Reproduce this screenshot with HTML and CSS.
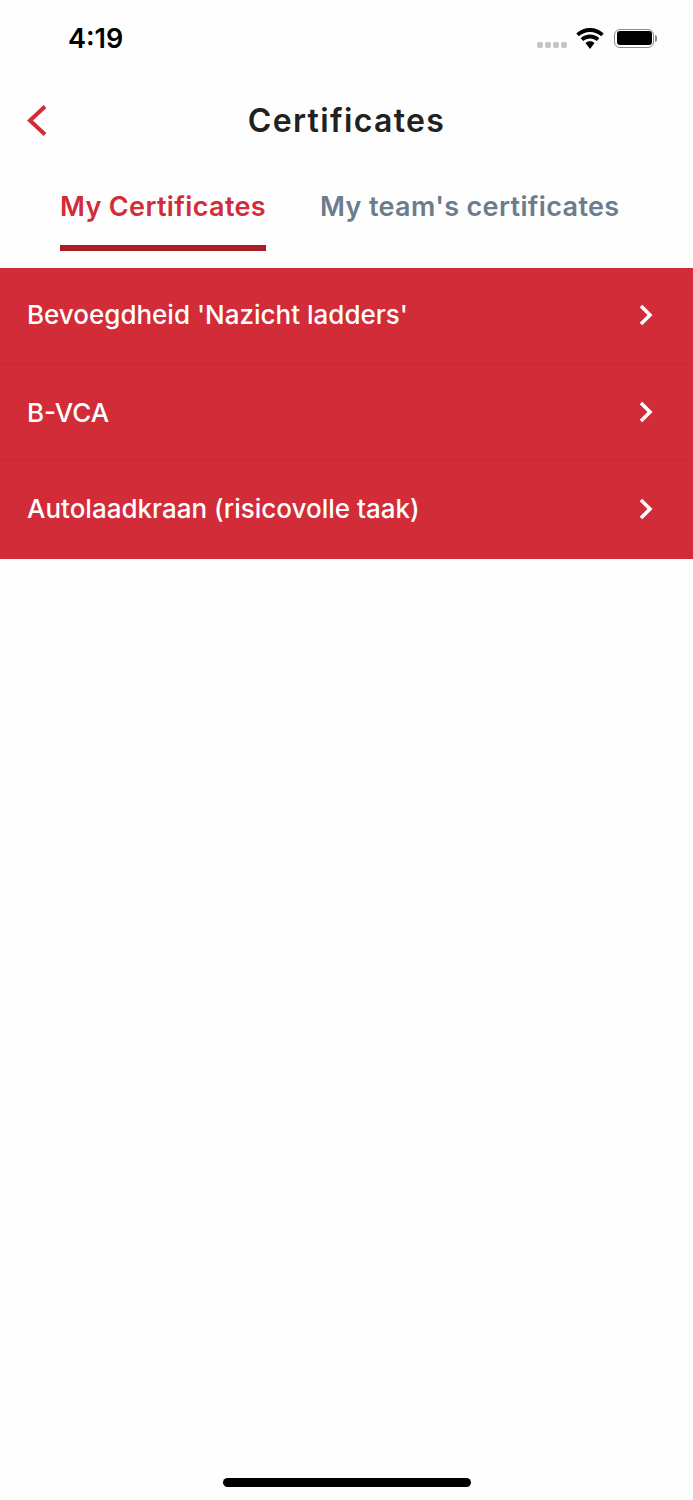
FILE: index.html
```html
<!DOCTYPE html>
<html lang="en">
<head>
    <meta charset="UTF-8">
    <meta name="viewport" content="width=device-width, initial-scale=1.0">
    <title>Certificates</title>
    <link rel="stylesheet" href="styles.css">
</head>
<body>
    <div class="screen">
        <div class="status-bar">
            <span class="time">4:19</span>
            <div class="status-icons">
                <div class="signal">
                    <span class="dot"></span><span class="dot"></span><span class="dot"></span><span class="dot"></span>
                </div>
                <svg class="wifi" width="28" height="21" viewBox="2 0.900 23 17.600">
                    <path d="M13.500 4.200c3.600 0 6.900 1.400 9.400 3.700l2.100-2.400C22 2.600 18 .9 13.500.9S5 2.600 2 5.500l2.100 2.400c2.500-2.300 5.800-3.700 9.400-3.700z" fill="#000"/>
                    <path d="M13.500 9.600c2.200 0 4.200.8 5.700 2.200l2.100-2.400c-2.100-1.900-4.800-3-7.800-3s-5.700 1.100-7.800 3l2.100 2.400c1.500-1.400 3.500-2.200 5.700-2.200z" fill="#000"/>
                    <path d="M13.500 12c-1.500 0-2.800.5-3.800 1.400l3.800 5.100 3.800-5.100c-1-.9-2.300-1.400-3.800-1.400z" fill="#000"/>
                </svg>
                <div class="battery">
                    <div class="battery-body"><div class="battery-fill"></div></div>
                    <div class="battery-tip"></div>
                </div>
            </div>
        </div>

        <div class="header">
            <a class="back" href="#">
                <svg width="22" height="34" viewBox="0 0 22 34">
                    <path d="M20 3.500 L5 17.500 L20 31.500" fill="none" stroke="#d12c38" stroke-width="4"/>
                </svg>
            </a>
            <h1>Certificates</h1>
        </div>

        <div class="tabs">
            <div class="tab active">My Certificates</div>
            <div class="tab">My team's certificates</div>
        </div>

        <div class="list">
            <div class="list-row">
                <span>Bevoegdheid 'Nazicht ladders'</span>
                <svg class="chevron" width="16" height="24" viewBox="0 0 16 24"><path d="M3 3 L12 12 L3 21" fill="none" stroke="#fff" stroke-width="3.600"/></svg>
            </div>
            <div class="list-row">
                <span>B-VCA</span>
                <svg class="chevron" width="16" height="24" viewBox="0 0 16 24"><path d="M3 3 L12 12 L3 21" fill="none" stroke="#fff" stroke-width="3.600"/></svg>
            </div>
            <div class="list-row">
                <span>Autolaadkraan (risicovolle taak)</span>
                <svg class="chevron" width="16" height="24" viewBox="0 0 16 24"><path d="M3 3 L12 12 L3 21" fill="none" stroke="#fff" stroke-width="3.600"/></svg>
            </div>
        </div>

        <div class="spacer"></div>
        <div class="home-bar"><div class="home-indicator"></div></div>
    </div>
</body>
</html>
```

FILE: styles.css
```css
body {
    font-family: Inter, "Liberation Sans", sans-serif;
    margin: 0;
    padding: 0;
    background-color: #fefefe;
}
.screen {
    display: flex;
    flex-direction: column;
    width: 693px;
    height: 1500px;
    overflow: hidden;
}
.status-bar {
    display: flex;
    justify-content: space-between;
    align-items: center;
    height: 76px;
    padding: 0 36px 0 68px;
    box-sizing: border-box;
}
.time {
    font-size: 27px;
    font-weight: 600;
    color: #000;
}
.status-icons {
    display: flex;
    align-items: center;
}
.signal {
    display: flex;
    gap: 2px;
    margin: 14px 9px 0 0;
}
.dot {
    width: 6px;
    height: 6px;
    border-radius: 2px;
    background-color: #c4c4c4;
}
.wifi {
    margin-right: 10px;
}
.battery {
    display: flex;
    align-items: center;
}
.battery-body {
    width: 35px;
    height: 14px;
    padding: 1.500px;
    border: 1.500px solid #8a8a8a;
    border-radius: 6px;
}
.battery-fill {
    height: 100%;
    background-color: #000;
    border-radius: 3px;
}
.battery-tip {
    width: 2px;
    height: 7px;
    margin-left: 1px;
    background-color: #8a8a8a;
    border-radius: 0 2px 2px 0;
}
.header {
    display: flex;
    align-items: center;
    justify-content: center;
    position: relative;
    height: 88px;
}
.back {
    position: absolute;
    left: 25px;
    top: 27px;
    line-height: 0;
}
h1 {
    margin: 0;
    font-size: 32px;
    font-weight: 600;
    letter-spacing: 1.350px;
    color: #212121;
}
.tabs {
    display: flex;
    gap: 54px;
    height: 87px;
    padding: 0 60px 17px;
}
.tab {
    display: flex;
    align-items: center;
    height: 77px;
    padding-top: 4px;
    font-size: 27px;
    font-weight: 600;
    letter-spacing: 0.350px;
    color: #6b7c8c;
    white-space: nowrap;
}
.tab.active {
    color: #d12c38;
    border-bottom: 6px solid #ab1c27;
}
.list {
    background-color: #d12c38;
}
.list-row {
    display: flex;
    justify-content: space-between;
    align-items: center;
    height: 97px;
    padding: 0 39px 0 27px;
    border-bottom: 1px solid #c42a35;
    box-sizing: border-box;
    font-size: 26px;
    font-weight: 500;
    color: #fff;
}
.list-row:first-child {
    height: 96px;
    padding-bottom: 2px;
}
.list-row:last-child {
    height: 98px;
    padding-bottom: 3px;
    border-bottom: none;
}
.spacer {
    flex: 1;
}
.home-bar {
    display: flex;
    justify-content: center;
    height: 22px;
}
.home-indicator {
    width: 248px;
    height: 9px;
    border-radius: 5px;
    background-color: #000;
}
```
